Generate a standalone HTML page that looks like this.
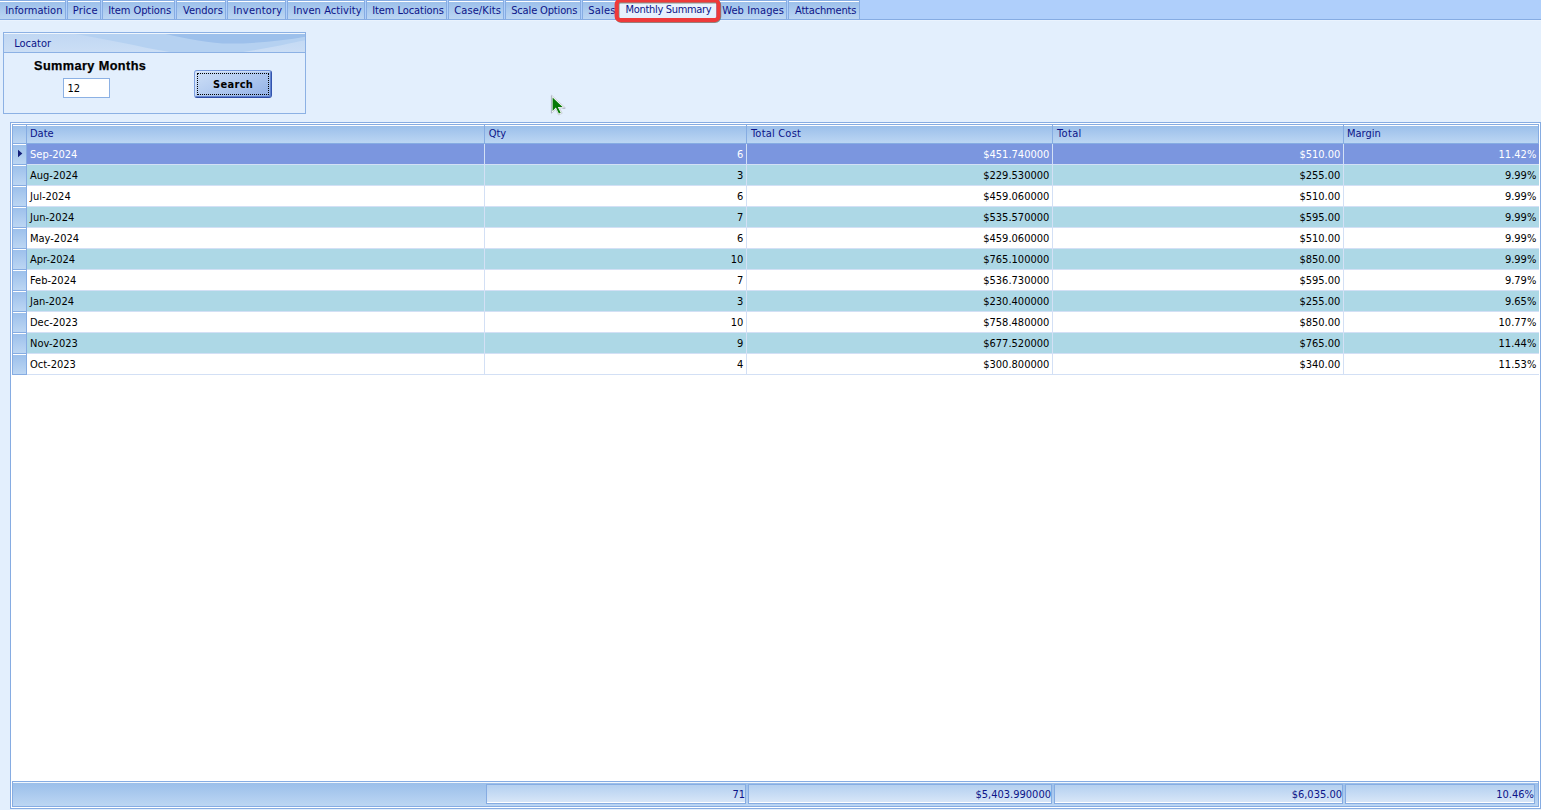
<!DOCTYPE html><html lang="en"><head><meta charset="utf-8"><title>Monthly Summary</title><style>
html,body{margin:0;padding:0}
body{width:1541px;height:810px;overflow:hidden;position:relative;background:#E3EFFD;font-family:"DejaVu Sans Condensed", "Liberation Sans", sans-serif;font-size:11px;color:#000;letter-spacing:0}
div,span{position:absolute;box-sizing:border-box;white-space:nowrap}
.tabbar{left:0;top:0;width:1541px;height:19px;background:#AFCFFB}
.tabline{left:0;top:19px;width:1541px;height:1px;background:#86ACE2}
.tabline2{left:0;top:20px;width:1541px;height:1px;background:#EAF3FE}
.tab{top:0;height:19px;border:1px solid #86ACE2;border-bottom:none;background:linear-gradient(#9BBFEA,#BCD6F3)}
.tab i{position:absolute;left:0;right:0;top:0;height:1px;background:#fff}
.tab span{top:1px;height:18px;line-height:18px;color:#0C1488}
.hl{color:#0C1488}
.grid{left:10px;top:122px;width:1531px;height:687px;border:1px solid #86ACE2;background:#fff}
.hdr{background:linear-gradient(#9BBFEA,#BCD6F3);border-top:1px solid #fff}
.hdr span{color:#0C1488;left:3px;top:-1px;height:18px;line-height:18px}
.ind{left:13px;width:13px;height:20px;background:linear-gradient(#9DC0EB,#BCD6F3);border-top:1px solid #fff}
.row{left:27px;width:1512px;height:20px}
.row span{top:1px;height:20px;line-height:20px}
.hline{left:27px;width:1512px;height:1px;background:#D3E0F5}
.vline{top:144px;width:1px;height:231px;background:#D3E0F5}
.b{background:#86ACE2}
.fcell{top:784px;height:20px;border:1px solid #86ACE2;background:linear-gradient(#B4D0F0,#D9E7F8)}
.fcell i{position:absolute;left:0;right:0;bottom:0;height:1px;background:#fff}
.fcell span{right:0;top:1px;height:18px;line-height:18px;color:#0C1488}
</style></head><body>
<div class="tabbar"></div><div class="tabline"></div><div class="tabline2"></div>
<div class="tab" style="left:-1px;width:67px"><i></i><span style="left:5.2px">Information</span></div>
<div class="tab" style="left:67px;width:34px"><i></i><span style="left:4.8px;letter-spacing:0.15px">Price</span></div>
<div class="tab" style="left:102px;width:73px"><i></i><span style="left:5.2px;letter-spacing:-0.08px">Item Options</span></div>
<div class="tab" style="left:176px;width:50px"><i></i><span style="left:6.0px">Vendors</span></div>
<div class="tab" style="left:227px;width:59px"><i></i><span style="left:5.2px;letter-spacing:0.22px">Inventory</span></div>
<div class="tab" style="left:287px;width:78px"><i></i><span style="left:5.2px;letter-spacing:0.07px">Inven Activity</span></div>
<div class="tab" style="left:366px;width:81px"><i></i><span style="left:5.2px;letter-spacing:-0.07px">Item Locations</span></div>
<div class="tab" style="left:448px;width:56px"><i></i><span style="left:5.2px;letter-spacing:0.11px">Case/Kits</span></div>
<div class="tab" style="left:505px;width:76px"><i></i><span style="left:5.2px;letter-spacing:-0.15px">Scale Options</span></div>
<div class="tab" style="left:582px;width:36px"><i></i><span style="left:5.2px;letter-spacing:0.22px">Sales</span></div>
<div class="tab" style="left:716px;width:71px"><i></i><span style="left:5.2px;letter-spacing:0.1px">Web Images</span></div>
<div class="tab" style="left:788px;width:72px"><i></i><span style="left:6.0px;letter-spacing:-0.18px">Attachments</span></div>
<div class="tab" style="left:617px;width:100px;top:-2px;height:22px;background:linear-gradient(#EDF5FE,#E3EFFD)"><span style="left:7.6px;top:2px;letter-spacing:-0.32px">Monthly Summary</span></div>
<svg style="position:absolute;left:608px;top:0" width="120" height="28" viewBox="608 0 120 28"><path d="M620.6 -1.7 L714.5 -1.7 A6 6 0 0 1 720.5 4.3 L720.5 16.2 A6 6 0 0 1 714.5 22.2 L620.6 22.2 A6 6 0 0 1 614.6 16.2 L614.6 4.3 A6 6 0 0 1 620.6 -1.7 Z M620.2 2.5 L715.0 2.5 A1.4 1.4 0 0 1 716.4 3.9 L716.4 16.5 A1.4 1.4 0 0 1 715.0 17.9 L620.2 17.9 A1.4 1.4 0 0 1 618.8 16.5 L618.8 3.9 A1.4 1.4 0 0 1 620.2 2.5 Z" fill="#3A5A48" fill-opacity=".6" fill-rule="evenodd" transform="translate(0.7 0.9)"/><path d="M620.6 -1.7 L714.5 -1.7 A6 6 0 0 1 720.5 4.3 L720.5 16.2 A6 6 0 0 1 714.5 22.2 L620.6 22.2 A6 6 0 0 1 614.6 16.2 L614.6 4.3 A6 6 0 0 1 620.6 -1.7 Z M620.2 2.5 L715.0 2.5 A1.4 1.4 0 0 1 716.4 3.9 L716.4 16.5 A1.4 1.4 0 0 1 715.0 17.9 L620.2 17.9 A1.4 1.4 0 0 1 618.8 16.5 L618.8 3.9 A1.4 1.4 0 0 1 620.2 2.5 Z" fill="#EE3A3A" fill-rule="evenodd"/></svg>
<div style="left:3px;top:32px;width:303px;height:82px;border:1px solid #8CB1E4"></div>
<svg style="position:absolute;left:4px;top:33px" width="301" height="19" viewBox="0 0 301 19">
<defs><linearGradient id="lg1" x1="0" y1="0" x2="0" y2="1"><stop offset="0" stop-color="#C0D7F3"/><stop offset="1" stop-color="#CBDEF5"/></linearGradient></defs>
<rect width="301" height="19" fill="url(#lg1)"/>
<path d="M64 0 C100 5 135 14 166 19 L239 19 C260 16 285 10.5 301 7.2 L301 0 Z" fill="#B5D1F1"/>
<path d="M157 0 C185 6 205 10.6 227 10.6 C252 10.6 280 7.5 301 3.8 L301 0 Z" fill="#9DC0EB"/>
<rect width="301" height="1" fill="#F0F6FD"/>
</svg>
<div style="left:4px;top:52px;width:301px;height:1px;background:#8CB1E4"></div>
<span class="hl" style="left:14.2px;top:34px;height:20px;line-height:20px">Locator</span>
<span style="left:34px;top:56px;height:20px;line-height:20px;font:bold 12.7px/20px 'Liberation Sans',sans-serif;letter-spacing:0.42px;-webkit-text-stroke:0.25px #000">Summary Months</span>
<div style="left:63px;top:78px;width:47px;height:20px;border:1px solid #8CB1E4;background:#fff"><span style="left:3.5px;top:1px;height:18px;line-height:18px">12</span></div>
<div style="left:194px;top:70px;width:78px;height:28px;border:1px solid;border-color:#7094DB #3354AE #2E4DA6 #7C9FE1;border-radius:3px;background:linear-gradient(155deg,#CFE0F7 0%,#B4CCF0 45%,#90AFE5 100%);box-shadow:inset 1px 1px 0 rgba(255,255,255,.3), inset -1px -1px 0 rgba(70,105,195,.7)">
<div style="left:2px;top:2px;right:2px;bottom:2px;border:1px dotted #000"></div>
<span style="left:0;right:0;top:5px;height:18px;line-height:18px;text-align:center;font-weight:bold;letter-spacing:0.3px;text-indent:0.3px">Search</span></div>
<svg style="position:absolute;left:549px;top:93px" width="20" height="24" viewBox="0 0 20 24">
<path d="M2.6 2.2 L2.6 20.3 L6.9 16.2 L9.6 22 L13.2 20.3 L10.4 14.9 L16.4 14.9 Z" fill="#fff" stroke="#C9CED6" stroke-width="1" stroke-linejoin="round" opacity=".9"/>
<path d="M2.4 2.6 L2.4 20.2 M13.5 15.3 L16.2 15.3" stroke="#AEB6C6" stroke-width="1" fill="none"/>
<path d="M3.6 4.6 L3.6 17.9 L6.9 14.6 L9.9 20.6 L11.7 19.8 L8.8 13.9 L13.6 13.9 Z" fill="#067906"/>
</svg>
<div class="grid"></div>
<div class="b" style="left:12px;top:124px;width:1527px;height:20px"></div>
<div class="hdr" style="left:13px;top:125px;width:13px;height:18px"></div>
<div class="hdr" style="left:27px;top:125px;width:457px;height:18px"><span>Date</span></div>
<div class="hdr" style="left:485px;top:125px;width:261px;height:18px"><span style="left:3.7px">Qty</span></div>
<div class="hdr" style="left:747px;top:125px;width:305px;height:18px"><span style="left:4px;letter-spacing:0.2px">Total Cost</span></div>
<div class="hdr" style="left:1053px;top:125px;width:290px;height:18px"><span style="left:4px;letter-spacing:0.35px">Total</span></div>
<div class="hdr" style="left:1344px;top:125px;width:194px;height:18px"><span>Margin</span></div>
<div class="b" style="left:12px;top:144px;width:15px;height:231px"></div>
<div class="ind" style="top:144px"></div>
<div class="row" style="top:144px;background:#7B96DF;color:#fff"><span style="left:3px">Sep-2024</span><span style="right:795.7px">6</span><span style="right:489.7px">$451.740000</span><span style="right:198.7px">$510.00</span><span style="right:2.7px">11.42%</span></div>
<div class="hline" style="top:164px"></div>
<div class="ind" style="top:165px"></div>
<div class="row" style="top:165px;background:#ADD8E6;color:#000"><span style="left:3px">Aug-2024</span><span style="right:795.7px">3</span><span style="right:489.7px">$229.530000</span><span style="right:198.7px">$255.00</span><span style="right:2.7px">9.99%</span></div>
<div class="hline" style="top:185px"></div>
<div class="ind" style="top:186px"></div>
<div class="row" style="top:186px;background:#fff;color:#000"><span style="left:3px">Jul-2024</span><span style="right:795.7px">6</span><span style="right:489.7px">$459.060000</span><span style="right:198.7px">$510.00</span><span style="right:2.7px">9.99%</span></div>
<div class="hline" style="top:206px"></div>
<div class="ind" style="top:207px"></div>
<div class="row" style="top:207px;background:#ADD8E6;color:#000"><span style="left:3px">Jun-2024</span><span style="right:795.7px">7</span><span style="right:489.7px">$535.570000</span><span style="right:198.7px">$595.00</span><span style="right:2.7px">9.99%</span></div>
<div class="hline" style="top:227px"></div>
<div class="ind" style="top:228px"></div>
<div class="row" style="top:228px;background:#fff;color:#000"><span style="left:3px">May-2024</span><span style="right:795.7px">6</span><span style="right:489.7px">$459.060000</span><span style="right:198.7px">$510.00</span><span style="right:2.7px">9.99%</span></div>
<div class="hline" style="top:248px"></div>
<div class="ind" style="top:249px"></div>
<div class="row" style="top:249px;background:#ADD8E6;color:#000"><span style="left:3px">Apr-2024</span><span style="right:795.7px">10</span><span style="right:489.7px">$765.100000</span><span style="right:198.7px">$850.00</span><span style="right:2.7px">9.99%</span></div>
<div class="hline" style="top:269px"></div>
<div class="ind" style="top:270px"></div>
<div class="row" style="top:270px;background:#fff;color:#000"><span style="left:3px">Feb-2024</span><span style="right:795.7px">7</span><span style="right:489.7px">$536.730000</span><span style="right:198.7px">$595.00</span><span style="right:2.7px">9.79%</span></div>
<div class="hline" style="top:290px"></div>
<div class="ind" style="top:291px"></div>
<div class="row" style="top:291px;background:#ADD8E6;color:#000"><span style="left:3px">Jan-2024</span><span style="right:795.7px">3</span><span style="right:489.7px">$230.400000</span><span style="right:198.7px">$255.00</span><span style="right:2.7px">9.65%</span></div>
<div class="hline" style="top:311px"></div>
<div class="ind" style="top:312px"></div>
<div class="row" style="top:312px;background:#fff;color:#000"><span style="left:3px">Dec-2023</span><span style="right:795.7px">10</span><span style="right:489.7px">$758.480000</span><span style="right:198.7px">$850.00</span><span style="right:2.7px">10.77%</span></div>
<div class="hline" style="top:332px"></div>
<div class="ind" style="top:333px"></div>
<div class="row" style="top:333px;background:#ADD8E6;color:#000"><span style="left:3px">Nov-2023</span><span style="right:795.7px">9</span><span style="right:489.7px">$677.520000</span><span style="right:198.7px">$765.00</span><span style="right:2.7px">11.44%</span></div>
<div class="hline" style="top:353px"></div>
<div class="ind" style="top:354px"></div>
<div class="row" style="top:354px;background:#fff;color:#000"><span style="left:3px">Oct-2023</span><span style="right:795.7px">4</span><span style="right:489.7px">$300.800000</span><span style="right:198.7px">$340.00</span><span style="right:2.7px">11.53%</span></div>
<div class="hline" style="top:374px"></div>
<div class="vline" style="left:484px"></div>
<div class="vline" style="left:746px"></div>
<div class="vline" style="left:1052px"></div>
<div class="vline" style="left:1343px"></div>
<svg style="position:absolute;left:17px;top:149px" width="7" height="10" viewBox="0 0 7 10"><path d="M1 0.7 L1 8.3 L5.3 4.5 Z" fill="#141E78"/></svg>
<div class="b" style="left:12px;top:781px;width:1527px;height:26px"></div>
<div style="left:13px;top:782px;width:1525px;height:24px;background:linear-gradient(#9BBFEA,#BCD6F3);border-top:1px solid #F2F7FD"></div>
<div class="fcell" style="left:486px;width:260px"><i></i><span>71</span></div>
<div class="fcell" style="left:748px;width:304px"><i></i><span>$5,403.990000</span></div>
<div class="fcell" style="left:1054px;width:289px"><i></i><span>$6,035.00</span></div>
<div class="fcell" style="left:1345px;width:190px"><i></i><span>10.46%</span></div>
</body></html>
